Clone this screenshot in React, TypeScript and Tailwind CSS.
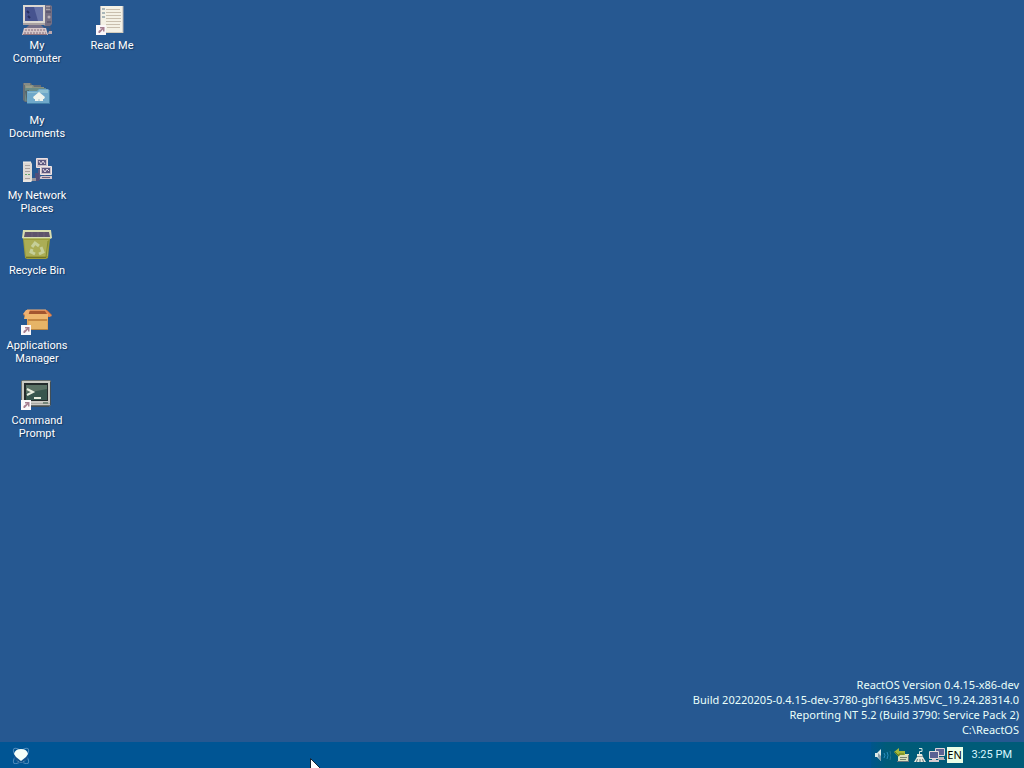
import type { ReactNode } from "react";

function Shortcut() {
  return (
    <g>
      <rect x="0" y="21" width="10" height="10" fill="#fbf8fa" />
      <path d="M2.5 29V27L6 24.5H4V23h4.5v4.5H7v-2L3.8 29Z" fill="#a77f91" />
    </g>
  );
}

function IconSvg({ children }: { children: ReactNode }) {
  return (
    <svg viewBox="0 0 32 32" className="size-8" aria-hidden="true">
      {children}
    </svg>
  );
}

function ComputerIcon() {
  return (
    <IconSvg>
      <path d="M24 1h5l2 1v18l-2 2h-6V2Z" fill="#746f83" />
      <path d="M25 2h4v4h-4z" fill="#a9a1a6" />
      <path d="M25 4h5M25 8h5M26 18h4" stroke="#494660" />
      <circle cx="28" cy="13" r="1.5" fill="#b7afb6" />
      <path d="M2 1h22v19H2z" fill="#dcd8d1" />
      <path d="M2 19h22v2H2z" fill="#aaa2a2" />
      <path d="M4 3h18v14H4z" fill="#46538f" />
      <path d="M13 3h9v14h-5Z" fill="#6673a8" />
      <path d="M6 7l2 2M7 12l2 2" stroke="#27305f" strokeWidth="2" />
      <path d="M8 21h12l3 3H5Z" fill="#777189" />
      <path d="M3 24h22l2 7H1Z" fill="#d7c7c8" />
      <path d="M4 26h21M3 29h22" stroke="#826d7c" strokeDasharray="2 1" />
      <path d="M2 30.5h24" stroke="#8f737c" />
      <path d="M24 23h5v3M29 26v3" stroke="#4b526e" fill="none" />
      <path d="M28 27h3v3h-4Z" fill="#bba7ac" />
    </IconSvg>
  );
}

function DocumentsIcon() {
  return (
    <IconSvg>
      <path d="M2 4h8l1 2h9v17H4L2 21Z" fill="#666e76" />
      <path d="M4 6h8l1 2h10v14H4Z" fill="#8b9280" />
      <path d="M4 9h21v13H4Z" fill="#698b87" />
      <path d="M3 5h6M5 8h6" stroke="#a6a797" />
      <path d="M4 12l2 11h2V11Z" fill="#52636d" />
      <path d="M6 12h10l2-2h9l2 2v13H6Z" fill="#6fa8ca" />
      <path d="M7 13h10l2-2h8v3H7Z" fill="#8bbdd0" />
      <path d="M18 13l-6 5 1 2h1v2h8v-2h1l1-2Z" fill="#f0f4ed" />
      <path d="M17 20h2v2h-2z" fill="#c9dadd" />
      <path d="M6 24.5h23M28.5 12v12" stroke="#427fa7" />
    </IconSvg>
  );
}

function NetworkIcon() {
  return (
    <IconSvg>
      <path d="M2 8h8l1 2v17l-1 1H2Z" fill="#dedad6" />
      <path d="M2 8h8M2 27h8" stroke="#f7f2ec" />
      <path d="M4 11.5h5M4 14.5h5M4 17.5h5M4 24.5h5" stroke="#aaa2a0" />
      <path d="M4 20.5h2M7 20.5h2" stroke="#67a46f" />
      <path d="M11 25h7v-9h6v8h6" stroke="#5a5983" strokeWidth="2" fill="none" />
      <path d="M14 19h4v8h-4z" fill="#514e79" />
      <path d="M15.5 4.5h11v9h-11z" fill="#c9bec8" stroke="#eee1e2" />
      <path d="M17 6h8v5h-8z" fill="#5d587f" />
      <path d="M18 7l2 3 2-3 2 3" stroke="#e8dce6" fill="none" />
      <path d="M19.5 12.5h11v8h-11z" fill="#c9bec8" stroke="#f0e6e5" />
      <path d="M21 14h8v5h-8z" fill="#5d587f" />
      <path d="M22 15l2 3 2-3 2 2" stroke="#e8dce6" fill="none" />
      <path d="M20 22h11v3H19v-2Z" fill="#d2c4cb" />
      <path d="M11 24h4v3h-4z" fill="#97949b" />
      <path d="M21 23.5h8" stroke="#6d607c" />
    </IconSvg>
  );
}

function RecycleIcon() {
  return (
    <IconSvg>
      <path d="M2 10h27l-2 19-2 1H6l-2-1Z" fill="#9c9c3c" />
      <path d="M3 11h24v16H5Z" fill="#abad55" />
      <path d="M2 1h28l1 8-2 1H3l-2-1Z" fill="#d8ddb0" />
      <path d="M4 3h24l1 5H3Z" fill="#5e536b" />
      <path d="M11 3v5M17 3v5M23 3v5" stroke="#6c6174" />
      <path d="M2 9.5h27" stroke="#b0b763" />
      <path d="M11 18l3-4 4 3M20 18l2 5-4 2M14 25l-4-2 1-3" stroke="#c6cf98" strokeWidth="3" fill="none" />
      <path d="M27 12l-2 16" stroke="#838c2f" />
      <path d="M5 28.5h20" stroke="#737627" />
    </IconSvg>
  );
}

function ApplicationsIcon() {
  return (
    <IconSvg>
      <path d="M6 11h21v15H6z" fill="#dda45e" />
      <path d="M6 6h20l5 5-3 2H6l-4-2Z" fill="#cb6c3b" />
      <path d="M7 7h18l1 3H6Z" fill="#a3552f" />
      <path d="M5 6h4l-2 6-5-2Z" fill="#f0b070" />
      <path d="M25 6l6 6-3 1-4-6Z" fill="#e68c55" />
      <path d="M6 6h19" stroke="#f3b077" />
      <path d="M4 10h23v5H3Z" fill="#eeb66e" />
      <path d="M7 15h19v2H7z" fill="#c48742" />
      <path d="M8 17h18v8H8z" fill="#e6b467" />
      <path d="M7 25.5h20" stroke="#b78543" />
      <Shortcut />
    </IconSvg>
  );
}

function TerminalIcon() {
  return (
    <IconSvg>
      <path d="M0 2l2-1h27l1 1v24l-2 2H2l-2-2Z" fill="#686f6e" />
      <path d="M1 2h28v24H1z" fill="#c9c9c3" />
      <path d="M3 4h24v18H3z" fill="#242b2c" />
      <path d="M5 6h21v15H5z" fill="#37564e" />
      <path d="M5 6h21v4L5 14Z" fill="#5a7165" />
      <path d="M6 10l6 3-6 3M13 19h7" stroke="#e8eddf" strokeWidth="2" fill="none" />
      <path d="M2 24.5h27" stroke="#a9aaa5" />
      <path d="M22 23h5v2h-5z" fill="#738578" />
      <path d="M29.5 3v23M10 27.5h18" stroke="#404e57" />
      <Shortcut />
    </IconSvg>
  );
}

function ReadMeIcon() {
  return (
    <IconSvg>
      <path d="M4 2h23v27H4z" fill="#f4f1e5" />
      <path d="M4.5 2v27M27 2v27" stroke="#b4b2b5" />
      <path d="M6 4h3v2H6zM6 8h3v2H6zM6 12h3v2H6z" fill="#a9b6b9" />
      <path d="M10 5.5h14M10 8.5h15M10 11.5h15M10 14.5h15M10 17.5h15M10 20.5h14M11 23.5h13" stroke="#c9bfae" />
      <path d="M6 28.5h21" stroke="#d6cebd" />
      <Shortcut />
    </IconSvg>
  );
}

const columns = [
  [
    { lines: ["My", "Computer"], icon: <ComputerIcon /> },
    { lines: ["My", "Documents"], icon: <DocumentsIcon /> },
    { lines: ["My Network", "Places"], icon: <NetworkIcon /> },
    { lines: ["Recycle Bin"], icon: <RecycleIcon /> },
    { lines: ["Applications", "Manager"], icon: <ApplicationsIcon /> },
    { lines: ["Command", "Prompt"], icon: <TerminalIcon /> },
  ],
  [{ lines: ["Read Me"], icon: <ReadMeIcon /> }],
];

function Tray() {
  return (
    <div className="flex h-full items-center bg-linear-to-r from-[#00558c] to-[#005b78] to-10% pr-3 pl-1">
      <button aria-label="Volume" className="mr-[3px]">
        <svg viewBox="0 0 16 16" className="size-4" aria-hidden="true">
          <path d="M0 6h2l4-4v12l-4-4H0Z" fill="#deeae8" />
          <path d="M3 6v4l3 4V9Z" fill="#8a9eaa" />
          <path d="M9 6q2 2 0 5M12 5q2 3 0 7" stroke="#2b8fc0" fill="none" />
          <path d="M15 4q2 4 0 9" stroke="#25748f" fill="none" />
        </svg>
      </button>
      <button aria-label="Safely remove hardware" className="mr-[2px]">
        <svg viewBox="0 0 16 16" className="size-4" aria-hidden="true">
          <path d="M4 7h11v7H4z" fill="#dce0bc" />
          <path d="M3 14.5h12M14.5 8v6" stroke="#69757c" />
          <path d="M6 10.5h7M6 12.5h6" stroke="#75826e" />
          <path d="M0 5l5-4v3h6v4H5v2Z" fill="#a5b83a" />
          <path d="M1 5l4 4V7h5" fill="none" stroke="#65791b" />
        </svg>
      </button>
      <button aria-label="Display settings" className="mr-px">
        <svg viewBox="0 0 16 16" className="size-4" aria-hidden="true">
          <path d="M7.500 7V4.500H10V1.500H7" stroke="#d5e5e0" fill="none" />
          <path d="M5 7h5l1 3 3 5H2l3-5Z" fill="#e7ebdf" />
          <path d="M5.500 12l-1 3M8 12v3M10.500 12l1 3" stroke="#61757e" />
          <path d="M5 9.5h6" stroke="#919b99" />
        </svg>
      </button>
      <button aria-label="Network connection">
        <svg viewBox="0 0 18 16" className="h-4 w-[18px]" aria-hidden="true">
          <path d="M6.500 1.500h9v7h-9z" fill="#5b6293" stroke="#ddd6d7" />
          <path d="M10 10h5v2h1v1H9Z" fill="#b9b2b8" />
          <path d="M.500 4.500h9v7h-9z" fill="#5b6293" stroke="#e4dcda" />
          <path d="M3 12h4v1h3v2H0v-2h3Z" fill="#d6cbcf" />
        </svg>
      </button>
      <button className="h-4 w-4 bg-[#e9ffe7] text-center text-[11px] leading-4 text-black font-['Noto_Sans',sans-serif]">EN</button>
      <time className="ml-[9px] whitespace-nowrap text-[11px] leading-4 text-[#d7f7ff]">3:25 PM</time>
    </div>
  );
}

export default function App() {
  return (
    <main className="relative flex h-screen flex-col overflow-hidden bg-[#265891] font-[Roboto,sans-serif] text-white">
      <section className="flex min-h-0 flex-1 flex-col justify-between" aria-label="Desktop">
        <div className="flex items-start gap-px">
          {columns.map((items, index) => (
            <div key={index} className="flex w-[74px] flex-col">
              {items.map((item) => (
                <button key={item.lines.join(" ")} className="flex h-[75px] w-full flex-col items-center pt-1 text-[11px] leading-[13px]">
                  {item.icon}
                  <span className="mt-[3px] whitespace-nowrap text-center [text-shadow:1px_1px_1px_#173b66]">
                    {item.lines.map((line) => <span key={line} className="block">{line}</span>)}
                  </span>
                </button>
              ))}
            </div>
          ))}
        </div>
        <div className="flex flex-col items-end pr-[5px] pb-[5px] text-[11px] leading-[15px] font-['Noto_Sans',sans-serif] text-[#eafff9]">
          <p>ReactOS Version 0.4.15-x86-dev</p>
          <p>Build 20220205-0.4.15-dev-3780-gbf16435.MSVC_19.24.28314.0</p>
          <p>Reporting NT 5.2 (Build 3790: Service Pack 2)</p>
          <p>C:\ReactOS</p>
        </div>
      </section>
      <footer className="flex h-[26px] shrink-0 items-center justify-between bg-[#005594] pl-3">
        <button aria-label="Start">
          <svg viewBox="0 0 18 18" className="size-[18px]" aria-hidden="true">
            <ellipse cx="9" cy="10" rx="10" ry="4" transform="rotate(45 9 10)" fill="none" stroke="#4f8bbb" />
            <ellipse cx="9" cy="10" rx="10" ry="4" transform="rotate(-45 9 10)" fill="none" stroke="#4f8bbb" />
            <circle cx="9" cy="10" r="7" fill="#13528b" />
            <path d="M2 8q1-5 7-5t7 5l-2 3-5 4-5-4Z" fill="#f5fff9" />
            <path d="M4 14q5 5 10 0l-5 3Z" fill="#a2cde0" />
          </svg>
        </button>
        <Tray />
      </footer>
      <svg viewBox="0 0 12 19" className="pointer-events-none absolute top-[758px] left-[310px] h-[19px] w-3" aria-hidden="true">
        <path d="M.5.5v16l4-4 3 6 2-1-3-6h5Z" fill="white" stroke="#172332" />
      </svg>
    </main>
  );
}
